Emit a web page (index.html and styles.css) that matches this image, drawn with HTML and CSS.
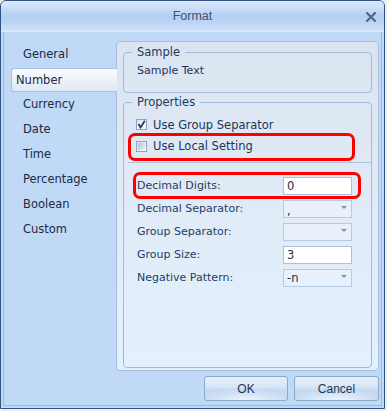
FILE: index.html
```html
<!DOCTYPE html>
<html>
<head>
<meta charset="utf-8">
<link rel="stylesheet" href="styles.css">
</head>
<body>
<div class="window">
  <div class="titlebar">
    <span></span>
    <span class="title">Format</span>
    <span class="close"><svg width="10" height="10" viewBox="0 0 10 10"><path d="M1 1 L9 9 M9 1 L1 9" stroke="#55687f" stroke-width="2.2" stroke-linecap="square" fill="none"/></svg></span>
  </div>
  <div class="main">
    <ul class="nav">
      <li>General</li>
      <li class="active">Number</li>
      <li>Currency</li>
      <li>Date</li>
      <li>Time</li>
      <li>Percentage</li>
      <li>Boolean</li>
      <li>Custom</li>
    </ul>
    <div class="panel">
      <fieldset class="group sample">
        <legend>Sample</legend>
        <div class="sample-text">Sample Text</div>
      </fieldset>
      <fieldset class="group props">
        <legend>Properties</legend>
        <div class="check-row">
          <span class="cb checked"><svg width="9" height="9" viewBox="0 0 9 9"><path d="M1.5 4 L3.6 7.5 L7.8 0.8" stroke="#1f3a66" stroke-width="1.7" fill="none"/></svg></span>
          <span>Use Group Separator</span>
        </div>
        <div class="check-row mark local">
          <span class="cb"><span class="cb-inner"></span></span>
          <span>Use Local Setting</span>
        </div>
        <div class="sep"></div>
        <div class="form-row mark">
          <span class="lbl">Decimal Digits:</span>
          <span class="ctrl text">0</span>
        </div>
        <div class="form-row">
          <span class="lbl">Decimal Separator:</span>
          <span class="ctrl combo"><span class="val comma">,</span><span class="arrow"></span></span>
        </div>
        <div class="form-row">
          <span class="lbl">Group Separator:</span>
          <span class="ctrl combo"><span class="val"></span><span class="arrow"></span></span>
        </div>
        <div class="form-row">
          <span class="lbl">Group Size:</span>
          <span class="ctrl text">3</span>
        </div>
        <div class="form-row">
          <span class="lbl">Negative Pattern:</span>
          <span class="ctrl combo"><span class="val">-n</span><span class="arrow"></span></span>
        </div>
      </fieldset>
    </div>
    <div class="buttons">
      <button class="btn ok">OK</button>
      <button class="btn cancel">Cancel</button>
    </div>
  </div>
</div>
</body>
</html>
```

FILE: styles.css
```css
html, body {
  margin: 0;
  padding: 0;
}
body {
  background: #eceef2;
  font-family: "DejaVu Sans", Verdana, sans-serif;
  font-size: 11px;
  color: #1c3559;
}
.window {
  width: 385px;
  height: 409px;
  box-sizing: border-box;
  border: 1px solid #2f5384;
  border-radius: 6px 6px 0 0;
  background: #c0d9f7;
  display: flex;
  flex-direction: column;
  overflow: hidden;
}
.titlebar {
  height: 30px;
  border-bottom: 1px solid #deeafa;
  background: linear-gradient(#dde9fa 0%, #c9ddf8 25%, #b5cff3 50%, #bad4f5 70%, #d2e3f9 100%);
  display: grid;
  grid-template-columns: 1fr auto 1fr;
  align-items: center;
}
.title {
  font-family: "Liberation Sans", Arial, sans-serif;
  font-size: 12.5px;
  color: #3d5273;
  margin-top: -1px;
}
.close {
  justify-self: end;
  margin-right: 8px;
  display: flex;
  margin-top: 1px;
}
.main {
  flex: 1;
  min-height: 0;
  margin: 0 2px 2px;
  border: 1px solid #9dbbe2;
  border-top: none;
  display: grid;
  grid-template-columns: 112px 1fr;
  grid-template-rows: 1fr auto;
  padding: 9px 2px 4px 0;
}
.nav {
  list-style: none;
  margin: 0;
  padding: 1px 0 0;
  grid-row: 1 / 3;
  color: #1a2b42;
  font-size: 11.5px;
}
.nav li {
  height: 25px;
  line-height: 25px;
  padding-left: 19px;
}
.nav li.active {
  height: 24px;
  line-height: 22px;
  margin: 1px -1px 0 7px;
  padding-left: 4px;
  border: 1px solid #a9c3e4;
  border-right: none;
  border-radius: 3px 0 0 3px;
  background: linear-gradient(#fbfdff, #e9f0fa 60%, #dfe8f4);
  box-sizing: border-box;
  position: relative;
  z-index: 1;
}
.panel {
  box-sizing: border-box;
  border: 1px solid #a6bfe1;
  border-radius: 4px;
  background: linear-gradient(#dbe5f1, #e4f1fc);
  padding: 0 6px 2px;
  display: flex;
  flex-direction: column;
  min-height: 0;
}
.group {
  margin: 0;
  padding: 0 8px;
  border: 1px solid #a2b9d8;
  border-radius: 4px;
  min-width: 0;
}
.group legend {
  padding: 0 5px;
  line-height: 13px;
  color: #1e3a60;
  font-size: 11.5px;
}
.sample {
  margin-top: 4px;
  padding-bottom: 14px;
}
.sample-text {
  padding: 5px 0 0 5px;
  line-height: 14px;
}
.props {
  margin-top: 3px;
  flex: 1;
}
.check-row {
  display: flex;
  align-items: center;
  gap: 6px;
  height: 21px;
  margin-top: 5px;
  padding-left: 4px;
  font-size: 11.5px;
}
.check-row.local {
  margin: 1px 0 0 -1px;
  width: 221px;
  height: 22px;
  box-sizing: border-box;
  padding: 0 0 2px 5px;
}
.mark {
  outline: 3px solid #ff0000;
  border-radius: 4px;
}
.cb {
  width: 11px;
  height: 11px;
  box-sizing: border-box;
  border: 1px solid #8ea3c0;
  background: linear-gradient(135deg, #dde3ec, #fbfcfe);
  display: flex;
  align-items: center;
  justify-content: center;
}
.cb-inner {
  width: 7px;
  height: 7px;
  background: linear-gradient(135deg, #b5bfcd, #eef1f6);
}
.sep {
  height: 1px;
  background: #aec3dc;
  margin: 4px -8px 0 -4px;
}
.form-row {
  display: flex;
  align-items: center;
  justify-content: space-between;
  height: 21px;
  width: 222px;
  box-sizing: border-box;
  margin: 2px 0 0 4px;
  padding: 0 6px 0 1px;
  color: #1f3d66;
}
.sep + .form-row {
  margin-top: 12px;
}
.ctrl {
  width: 69px;
  height: 18px;
  box-sizing: border-box;
  border: 1px solid #adc1dc;
  padding-left: 3px;
  display: flex;
  align-items: center;
  color: #1b2f4a;
  font-size: 11.5px;
}
.text {
  background: #ffffff;
}
.combo {
  background: #e8f1fb;
  border-color: #b7cae3;
  justify-content: space-between;
  padding-right: 4px;
}
.comma {
  margin-top: 4px;
}
.arrow {
  width: 0;
  height: 0;
  border-left: 3px solid transparent;
  border-right: 3px solid transparent;
  border-top: 3px solid #7a92b4;
  margin-bottom: 3px;
}
.buttons {
  grid-column: 2;
  display: flex;
  justify-content: flex-end;
  gap: 6px;
  margin-top: 5px;
}
.btn {
  height: 25px;
  box-sizing: border-box;
  border: 1px solid #8ba7cc;
  border-radius: 3px;
  background:
    radial-gradient(ellipse 60% 45% at 50% 100%, rgba(236,245,255,0.95), rgba(236,245,255,0) 100%),
    linear-gradient(#e6effa 0%, #d7e5f6 45%, #c6daf1 55%, #c3d8f0 100%);
  font-family: "Liberation Sans", Arial, sans-serif;
  font-size: 12px;
  color: #1f3655;
  padding: 0;
}
.ok {
  width: 84px;
}
.cancel {
  width: 85px;
}
```
